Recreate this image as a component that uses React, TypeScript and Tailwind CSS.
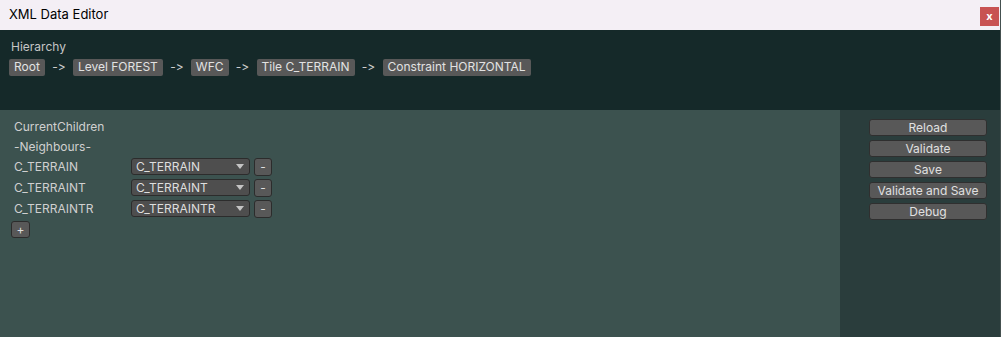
const crumbs = ["Root", "Level FOREST", "WFC", "Tile C_TERRAIN", "Constraint HORIZONTAL"]

const neighbours = [
    {name: "C_TERRAIN", value: "C_TERRAIN"},
    {name: "C_TERRAINT", value: "C_TERRAINT"},
    {name: "C_TERRAINTR", value: "C_TERRAINTR"},
]

const actions = ["Reload", "Validate", "Save", "Validate and Save", "Debug"]

function Crumb({label}: {label: string}) {
    return (
        <span className="h-[17px] px-[5px] flex items-center bg-[#585858] rounded-[2px] text-[#e2e2e2] leading-none">
            {label}
        </span>
    )
}

function NeighbourRow({name, value}: {name: string, value: string}) {
    return (
        <div className="flex items-center h-[17px] mb-[4px]">
            <span className="w-[120px] pl-[3px] text-[#d0d0d0]">{name}</span>
            <div className="w-[119px] h-[17px] flex items-center justify-between pl-[4px] pr-[5px] bg-[#4e4e4e] border border-[#2c2c2c] rounded-[3px] text-[#dedede]">
                <span className="leading-none">{value}</span>
                {/* 유니티 드롭다운 화살표 */}
                <svg width="8" height="5" viewBox="0 0 8 5">
                    <path d="M0 0 L8 0 L4 5 Z" fill="#c4c4c4"/>
                </svg>
            </div>
            <button className="ml-[4px] w-[18px] h-[18px] flex items-center justify-center bg-[#585858] border border-[#2c2c2c] rounded-[3px] text-[#dedede] leading-none">
                -
            </button>
        </div>
    )
}

function App() {

    return (
        <div className="w-[1001px] h-[337px] flex flex-col border-r border-[#44504f] text-[12px] [font-feature-settings:'calt'_0] [font-variant-ligatures:none]" style={{fontFamily: "Inter, 'Noto Sans', sans-serif"}}>

            {/* 타이틀바 */}
            <div className="h-[30px] shrink-0 flex items-center justify-between bg-[#f4eff5] pl-[9px] pr-[1px]">
                <span className="text-[13px] text-black">XML Data Editor</span>
                <button className="w-[19px] h-[19px] mt-[3px] flex items-center justify-center bg-[#c85252] text-white text-[11px] font-bold leading-none">
                    x
                </button>
            </div>

            {/* Hierarchy */}
            <div className="h-[80px] shrink-0 bg-[#152929] pl-[9px] pt-[9px]">
                <div className="pl-[2px] text-[#c6c6c6] leading-[16px]">Hierarchy</div>
                <div className="flex items-center mt-[3px]">
                    {crumbs.map((c, i) => (
                        <div key={c} className="flex items-center">
                            {i > 0 && <span className="w-[28px] text-center text-[#cfcfcf]">-&gt;</span>}
                            <Crumb label={c}/>
                        </div>
                    ))}
                </div>
            </div>

            <div className="flex-1 flex">
                {/* 왼쪽 패널 */}
                <div className="flex-1 bg-[#3c524f] pl-[11px] pt-[9px]">
                    <div className="pl-[3px] text-[#d0d0d0] leading-[16px]">CurrentChildren</div>
                    <div className="pl-[3px] mt-[4px] text-[#d0d0d0] leading-[16px]">-Neighbours-</div>
                    <div className="mt-[3px]">
                        {neighbours.map(n => (
                            <NeighbourRow key={n.name} name={n.name} value={n.value}/>
                        ))}
                    </div>
                    <button className="mt-[1px] w-[19px] h-[17px] flex items-center justify-center bg-[#585858] border border-[#2c2c2c] rounded-[3px] text-[#dedede] leading-none">
                        +
                    </button>
                </div>

                {/* 오른쪽 버튼들 */}
                <div className="w-[160px] bg-[#2a3d3c] pt-[9px] pl-[29px]">
                    <div className="flex flex-col gap-[4px]">
                        {actions.map(a => (
                            <button key={a} className="w-[118px] h-[17px] flex items-center justify-center bg-[#585858] border border-[#2f2f2f] rounded-[3px] text-[#e0e0e0] leading-none">
                                {a}
                            </button>
                        ))}
                    </div>
                </div>
            </div>
        </div>
    );
}

export default App;
